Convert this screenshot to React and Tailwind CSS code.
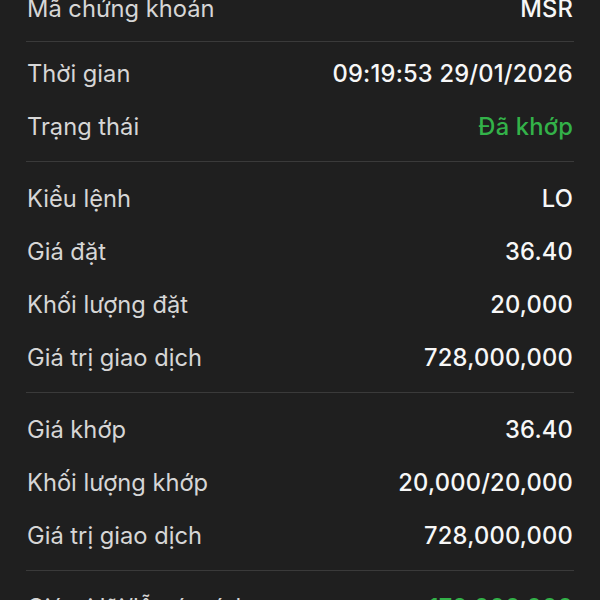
export default function App() {
  const sections = [
    { cls: 'pt-0 pb-[6px]', rows: [['Mã chứng khoán', 'MSR']] },
    {
      cls: 'pt-[5px] pb-[8px]',
      rows: [
        ['Thời gian', '09:19:53 29/01/2026'],
        ['Trạng thái', 'Đã khớp', 'green'],
      ],
    },
    {
      cls: 'pt-[10px] pb-[8px]',
      rows: [
        ['Kiểu lệnh', 'LO'],
        ['Giá đặt', '36.40'],
        ['Khối lượng đặt', '20,000'],
        ['Giá trị giao dịch', '728,000,000'],
      ],
    },
    {
      cls: 'pt-[10px] pb-[8px]',
      rows: [
        ['Giá khớp', '36.40'],
        ['Khối lượng khớp', '20,000/20,000'],
        ['Giá trị giao dịch', '728,000,000'],
      ],
    },
    { cls: 'pt-[10px] pb-0', rows: [['Giá trị lãi/lỗ ước tính', '172,000,000', 'green']] },
  ]

  return (
    <div className="w-[600px] h-[600px] overflow-hidden bg-[#1f1f1f] font-['Inter',sans-serif]">
      <div className="mt-[-18px] px-[26px]">
        {sections.map((s, i) => (
          <div key={i} className={i > 0 ? 'border-t border-[#3a3a3a]' : ''}>
            <div className={s.cls}>
              {s.rows.map(([label, value, tone]) => (
                <div key={label + value} className="h-[53px] flex items-center justify-between px-px text-[23.7px]">
                  <span className="text-[#d6d6d6]">{label}</span>
                  <span className={tone === 'green' ? 'font-medium text-[#33b249] tracking-[0.2px]' : 'font-medium text-[#f7f7f7] tracking-[0.2px]'}>
                    {value}
                  </span>
                </div>
              ))}
            </div>
          </div>
        ))}
      </div>
    </div>
  )
}
